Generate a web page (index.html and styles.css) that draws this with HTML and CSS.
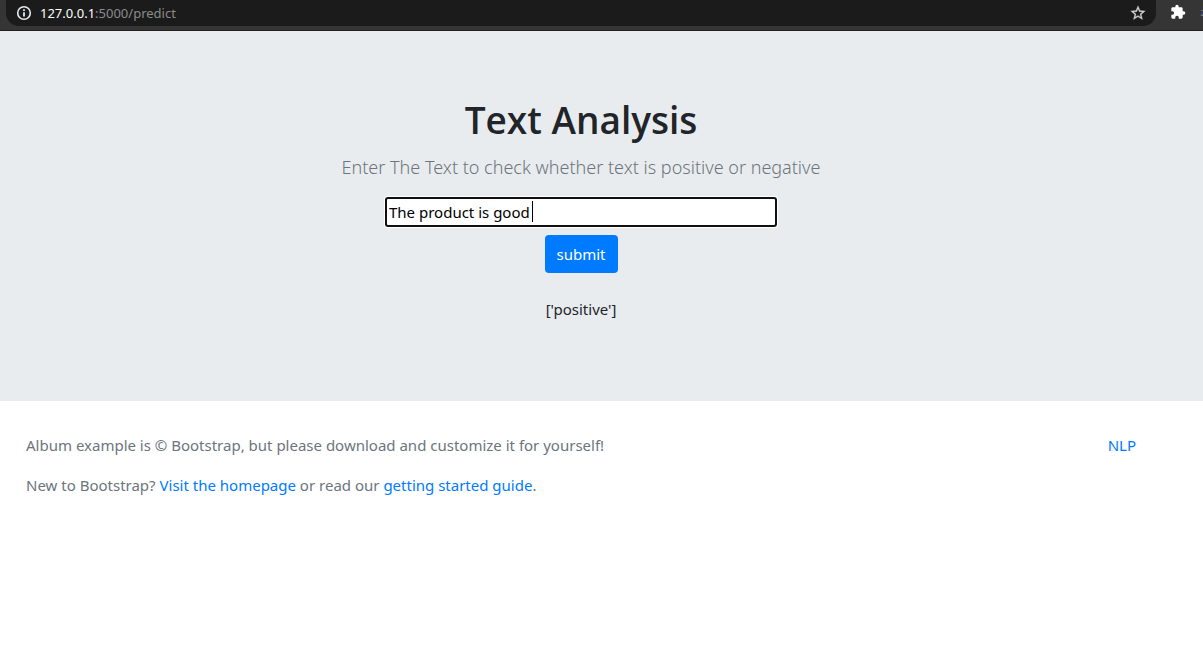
FILE: index.html
```html
<!DOCTYPE html>
<html lang="en">
<head>
<meta charset="utf-8">
<title>Text Analysis</title>
<link rel="stylesheet" href="styles.css">
</head>
<body>
<header class="toolbar">
  <div class="address">
    <svg class="icon" viewBox="0 0 16 16" aria-hidden="true"><circle cx="8" cy="8" r="6.3" fill="none" stroke="#e8eaed" stroke-width="1.6"/><path d="M7.100 7.200h1.800v4.200H7.100zM7.100 4.300h1.800v1.800H7.100z" fill="#e8eaed"/></svg>
    <span class="url"><span class="host">127.0.0.1</span>:5000/predict</span>
    <button class="icon-button" type="button" aria-label="Bookmark this page"><svg class="icon" viewBox="1 1 22 22"><path fill="#d0d2d5" stroke="#d0d2d5" stroke-width=".4" d="M22 9.24l-7.19-.62L12 2 9.19 8.63 2 9.24l5.46 4.73L5.82 21 12 17.27 18.18 21l-1.63-7.03L22 9.24zM12 15.4l-3.76 2.27 1-4.28-3.32-2.88 4.38-.38L12 6.1l1.71 4.04 4.38.38-3.32 2.88 1 4.28L12 15.4z"/></svg></button>
  </div>
  <button class="icon-button" type="button" aria-label="Extensions"><svg class="icon" viewBox="0 0 24 24"><path fill="#fff" d="M20.5 11H19V7c0-1.1-.9-2-2-2h-4V3.500a2.500 2.500 0 0 0-5 0V5H4c-1.1 0-2 .9-2 2v3.800h1.500a2.700 2.700 0 0 1 0 5.400H2V20c0 1.100.9 2 2 2h3.800v-1.500a2.700 2.700 0 0 1 5.400 0V22H17c1.100 0 2-.9 2-2v-4h1.500a2.500 2.500 0 0 0 0-5z"/></svg></button>
  <svg class="avatar" viewBox="0 0 4 16" aria-hidden="true"><path d="M4 1C1.500 3 0 5 0 8s1.500 5 4 7z" fill="#34363c"/><path d="M1 4h3v1H1zM1 10h3v2H1z" fill="#77787c"/><path d="M1 7h3v2H1z" fill="#293b70"/></svg>
</header>
<main class="hero">
  <h1 class="title">Text Analysis</h1>
  <p class="lead" id="prompt">Enter The Text to check whether text is positive or negative</p>
  <form class="form">
    <div class="field">
      <input class="text-input" type="text" value="The product is good" aria-labelledby="prompt">
      <span class="caret"></span>
    </div>
    <button class="submit" type="submit">submit</button>
  </form>
  <p class="result">['positive']</p>
</main>
<footer class="footer">
  <div class="container">
    <div>
      <p class="note">Album example is © Bootstrap, but please download and customize it for yourself!</p>
      <p class="note">New to Bootstrap? <a href="#home">Visit the homepage</a> or read our <a href="#guide">getting started guide</a>.</p>
    </div>
    <a href="#nlp">NLP</a>
  </div>
</footer>
</body>
</html>
```
FILE: styles.css
```css
* { box-sizing: border-box; }
body {
  margin: 0;
  background: #fff;
  color: #212529;
  font: 15px/24px "Segoe UI", "Noto Sans", sans-serif;
}
h1, p { margin: 0; }
a { color: #007bff; text-decoration: none; }

.toolbar {
  display: flex;
  align-items: flex-start;
  gap: 14px;
  height: 31px;
  padding-left: 6px;
  background: #353535;
  border-bottom: 1px solid #202020;
  overflow: hidden;
}
.address {
  display: flex;
  flex: 1;
  align-items: center;
  gap: 8px;
  height: 26px;
  padding: 0 10px;
  border-radius: 0 0 13px 13px;
  background: #1b1b1b;
}
.url {
  flex: 1;
  color: #8b8b8b;
  font-size: 13px;
}
.host { color: #fff; }
.icon { display: block; width: 16px; height: 16px; }
.icon-button {
  padding: 0;
  border: 0;
  background: none;
}
.toolbar > .icon-button { margin-top: 4px; }
.avatar { width: 3px; height: 16px; margin-top: 5px; }

.hero {
  padding: 65px 41px 80px 0;
  background: #e9ecef;
  text-align: center;
}
.title {
  margin-bottom: 8px;
  font-family: "Segoe UI", "Open Sans", sans-serif;
  font-size: 37px;
  font-weight: 600;
  line-height: 48px;
}
.lead {
  margin-bottom: 15px;
  color: #6c757d;
  font-size: 18px;
  font-weight: 300;
  line-height: 30px;
}
.form {
  display: flex;
  flex-direction: column;
  align-items: center;
  gap: 8px;
}
.field { position: relative; }
.text-input {
  display: block;
  width: 392px;
  height: 30px;
  padding: 0 2px;
  border: 2px solid #101010;
  border-radius: 3px;
  outline: 0;
  background: #fff;
  box-shadow: 0 0 0 1px #fff;
  color: #000;
  font: inherit;
}
.caret {
  position: absolute;
  top: 4px;
  left: 147px;
  width: 1px;
  height: 21px;
  background: #000;
}
.submit {
  height: 38px;
  padding: 0 12px;
  border: 0;
  border-radius: 4px;
  background: #007bff;
  color: #fff;
  font: inherit;
}
.result { margin-top: 24px; }

.footer { padding: 32px 41px 32px 0; color: #6c757d; }
.container {
  display: flex;
  justify-content: space-between;
  align-items: flex-start;
  max-width: 1140px;
  margin: 0 auto;
  padding: 0 15px;
}
.note { margin-bottom: 16px; }
```
